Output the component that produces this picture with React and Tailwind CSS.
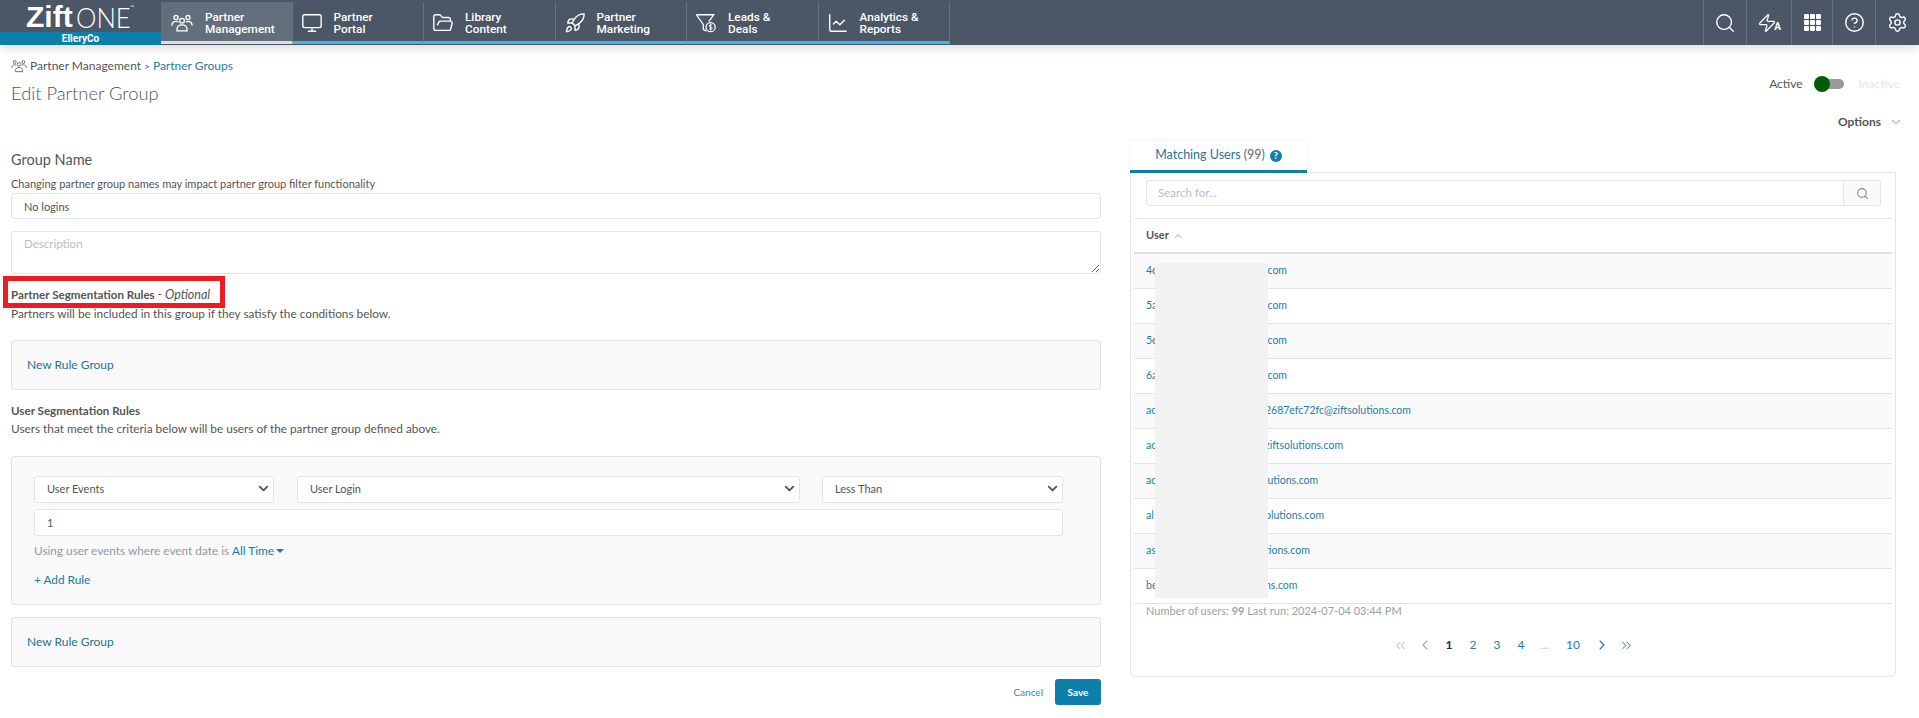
import { ChevronDown, ChevronUp, ChevronLeft, ChevronRight, ChevronsLeft, ChevronsRight, CircleHelp, FolderOpen, LineChart, Monitor, Rocket, Search, Settings, Zap } from "lucide-react";

function GroupIcon({ className }) {
  return (
    <svg viewBox="0 0 24 24" fill="none" stroke="currentColor" strokeWidth="1.4" className={className}>
      <circle cx="5.5" cy="6" r="2.2" />
      <circle cx="18.5" cy="6" r="2.2" />
      <circle cx="12" cy="9.5" r="2.6" />
      <path d="M1 15c0-3 1.8-4.8 4.5-4.8 1 0 1.8.3 2.5.8M23 15c0-3-1.8-4.8-4.5-4.8-1 0-1.8.3-2.5.8" />
      <path d="M6.5 20.5v-1.5c0-3 2.4-5 5.5-5s5.5 2 5.5 5v1.5z" />
    </svg>
  );
}

function FunnelIcon({ className }) {
  return (
    <svg viewBox="0 0 24 24" fill="none" stroke="currentColor" strokeWidth="1.4" className={className}>
      <path d="M1.5 3h19l-5.5 7.5M1.5 3l7.5 10.5V19l3.5 2" />
      <circle cx="17" cy="16.5" r="5" />
      <path d="M18.8 14.5c-.6-.7-3.4-.9-3.4.7 0 1.6 3.4.9 3.4 2.6 0 1.5-2.8 1.4-3.6.6M17 12.8v7.4" strokeWidth="1" />
    </svg>
  );
}

const NAV = [
  { a: "Partner", b: "Management", Icon: GroupIcon, active: true },
  { a: "Partner", b: "Portal", Icon: Monitor },
  { a: "Library", b: "Content", Icon: FolderOpen },
  { a: "Partner", b: "Marketing", Icon: Rocket },
  { a: "Leads &", b: "Deals", Icon: FunnelIcon },
  { a: "Analytics &", b: "Reports", Icon: LineChart },
];

const USERS = [
  ["4e", ".com"],
  ["5a", ".com"],
  ["5e", ".com"],
  ["6a", ".com"],
  ["ac", "2687efc72fc@ziftsolutions.com"],
  ["ac", "ziftsolutions.com"],
  ["ac", "lutions.com"],
  ["al", "olutions.com"],
  ["as", "tions.com"],
  ["be", "ns.com"],
];

function TopNav() {
  return (
    <header className="relative z-10 flex h-[45px] bg-[#4b5666] shadow-[0_3px_10px_rgba(0,0,0,0.15)]">
      <div className="flex w-[161px] shrink-0 flex-col">
        <div className="flex h-[32px] items-start pl-[26px] text-white">
          <span className="text-[30px] font-bold leading-[34px] [font-family:'Liberation_Sans',sans-serif]">Zift</span>
          <span className="-mr-[5px] ml-[3px] origin-left scale-x-[0.92] text-[28px] font-light leading-[34px] [font-family:Lato,sans-serif]">ONE</span>
          <span className="mt-[3px] text-[5px] leading-[8px]">™</span>
        </div>
        <div className="flex h-[13px] items-center justify-center bg-[#0e7fab] text-[10px] font-bold text-white [font-family:Roboto,sans-serif]">ElleryCo</div>
      </div>
      {NAV.map(({ a, b, Icon, active }) => (
        <div
          key={b}
          className={`mt-[2px] flex h-[42px] w-[131.5px] items-center border-b-[3px] border-r border-r-[#687382] pt-[3px] ${
            active ? "gap-[12px] border-b-[#dddddd] bg-[#636e7c] pl-[10px]" : "gap-[11px] border-b-[#41b6e6] pl-[8px]"
          }`}
        >
          <Icon className="h-[22px] w-[22px] shrink-0 text-white" strokeWidth={1.5} />
          <div className="text-[11.8px] font-medium leading-[12.5px] text-white [font-family:Roboto,sans-serif]">
            {a}
            <br />
            {b}
          </div>
        </div>
      ))}
      <div className="ml-auto flex text-white">
        <NavTool className="w-[43px]"><Search className="h-[22px] w-[22px]" strokeWidth={1.5} /></NavTool>
        <NavTool className="w-[45px]">
          <Zap className="h-[20px] w-[20px]" strokeWidth={1.5} />
          <span className="-ml-[3px] mt-[8px] text-[10px] font-bold leading-none [font-family:Roboto,sans-serif]">A</span>
        </NavTool>
        <NavTool className="w-[41px]">
          <div className="grid grid-cols-3 gap-[1px]">
            {[1, 2, 3, 4, 5, 6, 7, 8, 9].map((n) => (
              <span key={n} className="h-[5px] w-[5px] rounded-[1px] bg-white" />
            ))}
          </div>
        </NavTool>
        <NavTool className="w-[43px]"><CircleHelp className="h-[21px] w-[21px]" strokeWidth={1.6} /></NavTool>
        <NavTool className="w-[44px]"><Settings className="h-[21px] w-[21px]" strokeWidth={1.6} /></NavTool>
      </div>
    </header>
  );
}

function NavTool({ className, children }) {
  return <div className={`flex items-center justify-center border-l border-l-[#687382] ${className}`}>{children}</div>;
}

function Select({ value, className }) {
  return (
    <div className={`relative ${className}`}>
      <select defaultValue={value} className="h-[27px] w-full appearance-none rounded-[3px] border border-[#dfe8e8] bg-white pl-[12px] text-[11px] text-[#555555] outline-none">
        <option>{value}</option>
      </select>
      <ChevronDown className="pointer-events-none absolute right-[3px] top-[6px] h-[15px] w-[15px] text-[#555555]" strokeWidth={3} />
    </div>
  );
}

function RuleGroupPanel() {
  return (
    <div className="flex h-[50px] items-center rounded-[3px] border border-[#e0e4e4] bg-[#f9f9f9] pl-[15px] text-[12px] text-[#23749a]">
      New Rule Group
    </div>
  );
}

function EditForm() {
  return (
    <div className="w-[1090px] shrink-0 text-[#555555]">
      <h2 className="mt-[9px] text-[14.5px] leading-[20px] text-[#555555]">Group Name</h2>
      <p className="mt-[6px] h-[17px] text-[11px] leading-[16px]">Changing partner group names may impact partner group filter functionality</p>
      <input defaultValue="No logins" className="block h-[26px] w-full rounded-[3px] border border-[#dfe8e8] px-[12px] text-[11px] text-[#555555] outline-none" />
      <textarea placeholder="Description" className="mt-[12px] block h-[43px] w-full rounded-[3px] border border-[#dfe8e8] px-[12px] py-[3px] text-[11.5px] outline-none placeholder:text-[#b8bcc8]" />

      <div className="relative mt-[12px] h-[18px] text-[11.6px] leading-[18px]">
        <span className="font-bold">Partner Segmentation Rules</span>
        <span className="text-[12.5px] italic"> - Optional</span>
        <div className="absolute -top-[10px] -left-[8px] h-[32px] w-[222px] border-[5px] border-[#ed1c24]" />
      </div>
      <p className="mt-[1px] text-[11.8px] leading-[18px]">Partners will be included in this group if they satisfy the conditions below.</p>

      <div className="mt-[17px]"><RuleGroupPanel /></div>

      <h3 className="mt-[12px] text-[11.6px] font-bold leading-[18px]">User Segmentation Rules</h3>
      <p className="text-[11.8px] leading-[18px]">Users that meet the criteria below will be users of the partner group defined above.</p>

      <div className="mt-[18px] h-[149px] rounded-[3px] border border-[#e0e4e4] bg-[#f9f9f9] pl-[22px] pt-[18px]">
        <div className="flex w-[1030px]">
          <Select value="User Events" className="w-[240px]" />
          <Select value="User Login" className="ml-[23px] w-[503px]" />
          <Select value="Less Than" className="ml-[22px] w-[241px]" />
        </div>
        <input defaultValue="1" className="mt-[6px] block h-[27px] w-[1029px] rounded-[3px] border border-[#dfe8e8] bg-white px-[12px] text-[11px] text-[#555555] outline-none" />
        <p className="mt-[6px] flex items-center text-[11.8px] leading-[18px] text-[#8f9aa0]">
          Using user events where event date is <span className="ml-[3px] text-[#0e7fab]">All Time</span>
          <span className="ml-[2px] h-0 w-0 border-x-[4px] border-t-[4px] border-x-transparent border-t-[#0e7fab]" />
        </p>
        <p className="mt-[11px] text-[11.8px] leading-[18px] text-[#0e7fab]">+ Add Rule</p>
      </div>

      <div className="mt-[12px]"><RuleGroupPanel /></div>

      <div className="mt-[12px] flex items-center justify-end gap-[12px]">
        <span className="text-[10px] text-[#3288b0]">Cancel</span>
        <button className="h-[26px] w-[46px] rounded-[3px] bg-[#0e7fab] text-[10px] font-bold text-white">Save</button>
      </div>
    </div>
  );
}

function MatchingUsers() {
  return (
    <div className="ml-[29px] w-[766px] shrink-0">
      <div className="relative z-10 flex h-[32px] w-[177px] items-center justify-center border-b-[3px] border-[#0e7fab] bg-white text-[12.5px] shadow-[0_-1px_4px_rgba(0,0,0,0.06)]">
        <span className="text-[#23749a]">Matching Users</span>
        <span className="ml-[3px] text-[#666666]">(99)</span>
        <span className="ml-[5px] flex h-[12px] w-[12px] items-center justify-center rounded-full bg-[#0e7fab] text-[9px] font-black leading-none text-white">?</span>
      </div>
      <div className="relative -mt-[1px] h-[505px] rounded-b-[5px] border border-[#dfe8e8] px-[3px]">
        <div className="ml-[12px] mt-[7px] flex h-[26px] w-[735px] rounded-[3px] border border-[#dfe8e8]">
          <input placeholder="Search for..." className="min-w-0 flex-1 px-[11px] text-[11.5px] outline-none placeholder:text-[#b8bcc8]" />
          <div className="flex w-[37px] items-center justify-center border-l border-l-[#dfe8e8] bg-[#fafafa]">
            <Search className="h-[13px] w-[13px] text-[#888888]" />
          </div>
        </div>
        <div className="mt-[12px] flex h-[36px] items-center gap-[3px] border-y border-t-[#e0e4e4] border-b-[#dde1e3] border-b-2 pl-[12px] text-[11px] font-bold text-[#555555]">
          User <ChevronUp className="h-[12px] w-[12px] text-[#888888]" strokeWidth={1.5} />
        </div>
        {USERS.map(([start, end], i) => (
          <div
            key={i}
            className={`flex h-[35px] items-center border-b border-b-[#e0e4e4] pl-[12px] text-[10.5px] text-[#1f7da6] ${i % 2 === 0 ? "bg-[#f9f9f9]" : "bg-white"}`}
          >
            <span className="w-[119px] shrink-0">{start}</span>
            <span>{end}</span>
          </div>
        ))}
        <div className="absolute left-[24px] top-[90px] h-[335px] w-[113px] bg-[#f2f2f2]" />
        <p className="pl-[12px] text-[11px] leading-[14px] text-[#9aa1a6]">
          Number of users: <b>99</b> Last run: 2024-07-04 03:44 PM
        </p>
        <div className="mt-[18px] flex items-center justify-center text-[12px] text-[#1f7da6]">
          <span className="flex w-[25px] justify-center text-[#aaaaaa]"><ChevronsLeft className="h-[15px] w-[15px]" strokeWidth={1.6} /></span>
          <span className="flex w-[24px] justify-center text-[#aaaaaa]"><ChevronLeft className="h-[16px] w-[16px]" strokeWidth={1.6} /></span>
          <span className="flex w-[24px] justify-center font-bold text-[#1c2b36]">1</span>
          <span className="flex w-[24px] justify-center">2</span>
          <span className="flex w-[24px] justify-center">3</span>
          <span className="flex w-[24px] justify-center">4</span>
          <span className="flex w-[24px] justify-center text-[#bbbbbb]">...</span>
          <span className="flex w-[32px] justify-center">10</span>
          <span className="flex w-[25px] justify-center"><ChevronRight className="h-[16px] w-[16px]" strokeWidth={1.6} /></span>
          <span className="flex w-[24px] justify-center"><ChevronsRight className="h-[15px] w-[15px]" strokeWidth={1.6} /></span>
        </div>
      </div>
    </div>
  );
}

export default function App() {
  return (
    <div className="h-[718px] overflow-hidden bg-white [font-family:Lato,sans-serif]">
      <TopNav />
      <div className="flex h-[96px] justify-between pl-[11px] pr-[19px]">
        <div>
          <div className="mt-[13px] flex items-center text-[12px] leading-[16px] text-[#555555]">
            <GroupIcon className="mr-[3px] h-[16px] w-[16px] text-[#666666]" />
            Partner Management <span className="mx-[3px] text-[10px]">&gt;</span>
            <span className="text-[#1f7da6]">Partner Groups</span>
          </div>
          <h1 className="mt-[7px] text-[18.3px] font-light leading-[24px] text-[#555555]">Edit Partner Group</h1>
        </div>
        <div className="flex flex-col items-end">
          <div className="mt-[31px] flex h-[16px] items-center text-[12px]">
            <span className="text-[#555555]">Active</span>
            <div className="relative ml-[11px] h-[10px] w-[30px] rounded-full bg-[#999999]">
              <span className="absolute -top-[3px] left-0 h-[16px] w-[16px] rounded-full bg-[#035c03]" />
            </div>
            <span className="ml-[15px] text-[#e2e8ee]">Inactive</span>
          </div>
          <div className="-mr-[3px] mt-[21px] flex items-center text-[12px] font-bold text-[#555555]">
            Options <ChevronDown className="ml-[8px] h-[14px] w-[14px] text-[#777777]" strokeWidth={1.4} />
          </div>
        </div>
      </div>
      <div className="flex pl-[11px]">
        <EditForm />
        <MatchingUsers />
      </div>
    </div>
  );
}
